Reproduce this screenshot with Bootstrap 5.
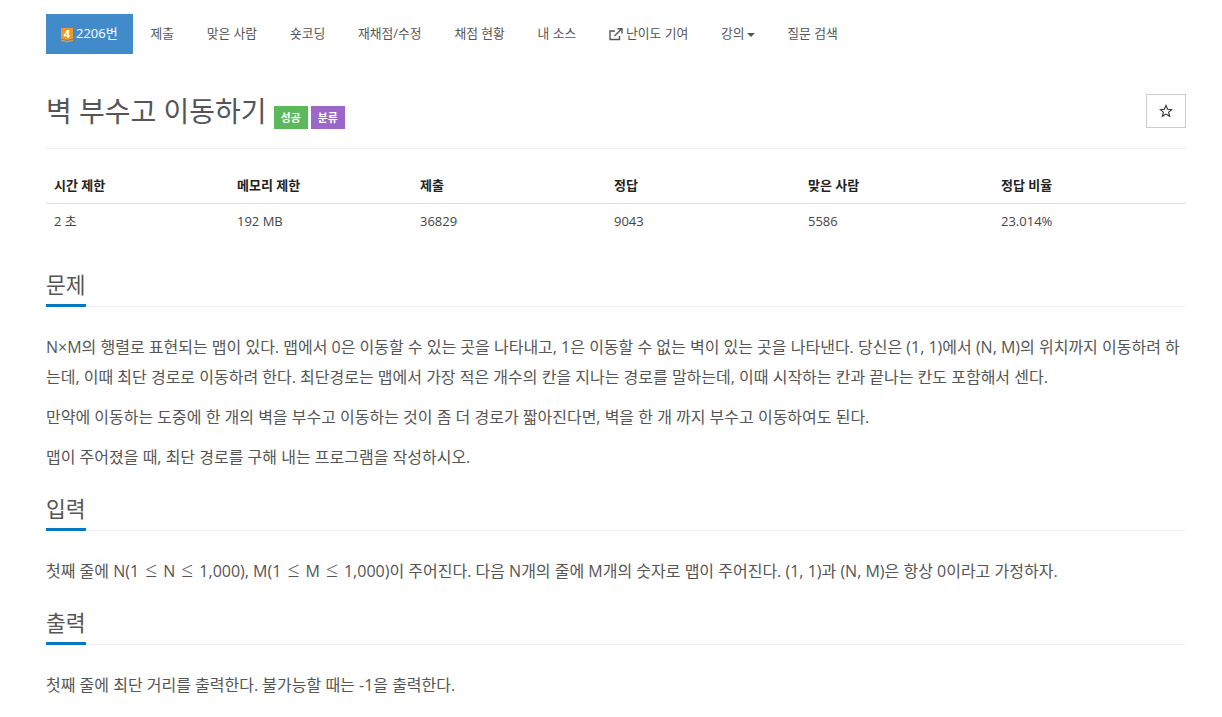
<!DOCTYPE html>
<html lang="ko">
<head>
  <meta charset="UTF-8" />
  <meta name="viewport" content="width=device-width, initial-scale=1" />
  <title>2206번: 벽 부수고 이동하기</title>
  <link href="https://cdn.jsdelivr.net/npm/bootstrap@5.3.0/dist/css/bootstrap.min.css" rel="stylesheet" />
  <style>
    body { font-family: "Open Sans", "Noto Sans CJK KR", sans-serif; font-size: 14px; color: #333; background: #fff; overflow: hidden; }
    .page-wrap { padding: 14px 36px 0 46px; }
    .prob-nav { height: 40px; margin-bottom: 26px; gap: 2px; }
    .prob-nav .nav-link { color: #555; font-size: 12.8px; padding: 0 15.4px; height: 40px; display: flex; align-items: center; gap: 3px; }
    .prob-nav .nav-link.active { background: #428bca; color: #fff; font-size: 13px; padding: 0 0 0 15px; width: 87px; }
    .tier-icon { margin-top: 2px; overflow: visible; }
    .prob-nav .caret-down { width: 0; height: 0; border-left: 4px solid transparent; border-right: 4px solid transparent; border-top: 4px solid #555; margin-top: 2px; margin-left: -1px; }
    .title-row { border-bottom: 1px solid #eee; height: 69px; }
    .prob-title { font-size: 28px; font-weight: 400; color: #555; line-height: 36px; margin: 13px 0 0; }
    .lab { font-size: 10.8px; font-weight: 700; color: #fff; line-height: 23px; height: 23px; width: 34px; text-align: center; margin: 26px 0 0 3px; }
    .lab-green { background: #5cb85c; margin-left: 7px; }
    .lab-purple { background: #9b68c9; }
    .star-btn { width: 40px; height: 34px; margin-top: 14px; border: 1px solid #ccc; background: #fff; padding: 0; }
    .info-table { margin: 20px 0 0; font-size: 13px; }
    .info-table th, .info-table td { padding: 0 8px; border-color: #ddd; vertical-align: middle; }
    .info-table th { height: 34px; font-weight: 700; color: #222; border-bottom: 1px solid #ddd; }
    .info-table td { height: 36px; color: #444; border-bottom: 0; }
    .sec-head { border-bottom: 1px dotted #e3e3e3; height: 37px; margin: 22px 0 25px; }
    .sec-head span { display: inline-block; height: 37px; border-bottom: 3px solid #0678c3; color: #555; font-size: 21.5px; line-height: 29px; width: 40px; white-space: nowrap; }
    .first-head { margin-top: 31px; }
    .sec-body p { font-size: 16px; line-height: 30px; margin: 0 0 10px; color: #555; }
    .le-sign { margin: 0 1.9px; font-size: 21px; font-weight: 300; line-height: 1; }
  </style>
</head>
<body>
  <div class="page-wrap">
    <ul class="nav prob-nav">
      <li class="nav-item">
        <a class="nav-link active" href="#">
          <svg class="tier-icon" width="12" height="15" viewBox="0 0 12 15"><path d="M0 0H12V10.5L6 12 0 10.5Z" fill="#ec9a29"/><path d="M0 11.6 6 13.1 12 11.6V13L6 14.6 0 13Z" fill="#ec9a29"/><text x="6" y="9.8" text-anchor="middle" font-size="11" font-weight="700" fill="#fff">4</text></svg>
          <span>2206번</span>
        </a>
      </li>
      <li class="nav-item"><a class="nav-link" href="#">제출</a></li>
      <li class="nav-item"><a class="nav-link" href="#">맞은 사람</a></li>
      <li class="nav-item"><a class="nav-link" href="#">숏코딩</a></li>
      <li class="nav-item"><a class="nav-link" href="#">재채점/수정</a></li>
      <li class="nav-item"><a class="nav-link" href="#">채점 현황</a></li>
      <li class="nav-item"><a class="nav-link" href="#">내 소스</a></li>
      <li class="nav-item">
        <a class="nav-link" href="#">
          <svg width="14" height="13" viewBox="0 0 14 13" fill="none" stroke="#555" stroke-width="1.4"><path d="M10.5 8V11.5H1V3H6"/><path d="M5.5 8 12.5 1M8.5 .8H13V5.5"/></svg>
          난이도 기여
        </a>
      </li>
      <li class="nav-item"><a class="nav-link" href="#">강의<span class="caret-down"></span></a></li>
      <li class="nav-item"><a class="nav-link" href="#">질문 검색</a></li>
    </ul>

    <div class="title-row d-flex justify-content-between align-items-start">
      <div class="d-flex align-items-start">
        <h1 class="prob-title">벽 부수고 이동하기</h1>
        <span class="lab lab-green">성공</span>
        <span class="lab lab-purple">분류</span>
      </div>
      <button class="btn star-btn rounded-0 d-flex align-items-center justify-content-center" type="button" aria-label="즐겨찾기">
        <svg width="14" height="14" viewBox="0 0 14 14" fill="none" stroke="#333" stroke-width="1.1"><path d="M7 1.5 8.6 5.3 12.7 5.6 9.6 8.2 10.6 12.3 7 10.1 3.4 12.3 4.4 8.2 1.3 5.6 5.4 5.3Z"/></svg>
      </button>
    </div>

    <table class="table info-table">
      <thead>
        <tr><th style="width:183px">시간 제한</th><th style="width:183px">메모리 제한</th><th style="width:194px">제출</th><th style="width:194px">정답</th><th style="width:193px">맞은 사람</th><th>정답 비율</th></tr>
      </thead>
      <tbody>
        <tr><td>2 초</td><td>192 MB</td><td>36829</td><td>9043</td><td>5586</td><td>23.014%</td></tr>
      </tbody>
    </table>

    <section class="sec-body">
      <div class="sec-head first-head"><span>문제</span></div>
      <p>N×M의 행렬로 표현되는 맵이 있다. 맵에서 0은 이동할 수 있는 곳을 나타내고, 1은 이동할 수 없는 벽이 있는 곳을 나타낸다. 당신은 (1, 1)에서 (N, M)의 위치까지 이동하려 하는데, 이때 최단 경로로 이동하려 한다. 최단경로는 맵에서 가장 적은 개수의 칸을 지나는 경로를 말하는데, 이때 시작하는 칸과 끝나는 칸도 포함해서 센다.</p>
      <p>만약에 이동하는 도중에 한 개의 벽을 부수고 이동하는 것이 좀 더 경로가 짧아진다면, 벽을 한 개 까지 부수고 이동하여도 된다.</p>
      <p>맵이 주어졌을 때, 최단 경로를 구해 내는 프로그램을 작성하시오.</p>
    </section>
    <section class="sec-body">
      <div class="sec-head"><span>입력</span></div>
      <p>첫째 줄에 N(1 <span class="le-sign">≤</span> N <span class="le-sign">≤</span> 1,000), M(1 <span class="le-sign">≤</span> M <span class="le-sign">≤</span> 1,000)이 주어진다. 다음 N개의 줄에 M개의 숫자로 맵이 주어진다. (1, 1)과 (N, M)은 항상 0이라고 가정하자.</p>
    </section>
    <section class="sec-body">
      <div class="sec-head"><span>출력</span></div>
      <p>첫째 줄에 최단 거리를 출력한다. 불가능할 때는 -1을 출력한다.</p>
    </section>
  </div>
  <script src="https://cdn.jsdelivr.net/npm/bootstrap@5.3.0/dist/js/bootstrap.bundle.min.js"></script>
</body>
</html>
